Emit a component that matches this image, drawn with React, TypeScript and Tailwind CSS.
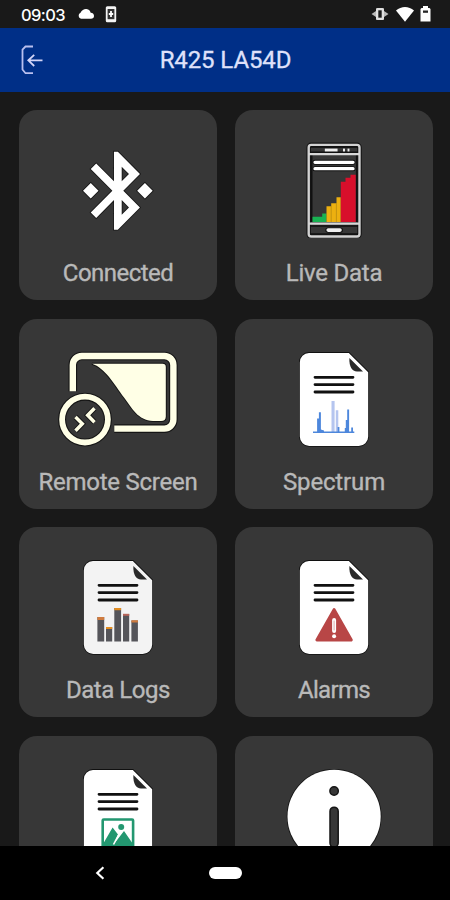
import type { ReactNode } from 'react'

function DocumentIcon({ children, fill = '#ffffff' }: { children: ReactNode; fill?: string }) {
  return (
    <svg viewBox="0 0 120 96" className="h-24 w-30" fill="none" aria-hidden="true">
      <path
        d="M35 1.9H74.8L94.2 21.2V85.5A9.5 9.5 0 0 1 84.7 95H35.3A9.5 9.5 0 0 1 25.8 85.5V11.4A9.5 9.5 0 0 1 35 1.9Z"
        fill={fill}
        stroke="#101010"
        strokeWidth="1.6"
        paintOrder="stroke"
      />
      <path d="M75.4 7L89 20.6H83C78 20 75 16 75.4 7Z" fill="#292929" />
      <path
        d="M41 26.3H79M41 33.6H79M41 41H79"
        stroke="#111111"
        strokeWidth="2.8"
        strokeLinecap="round"
      />
      {children}
    </svg>
  )
}

function BluetoothIcon() {
  return (
    <svg viewBox="0 0 120 96" className="h-24 w-30" aria-hidden="true">
      <path
        transform="translate(13.4 1.9) scale(3.87 3.9)"
        d="M7 12l-2-2-2 2 2 2 2-2zm10.71-4.29L12 2h-1v7.59L6.41 5 5 6.41 10.59 12 5 17.59 6.41 19 11 14.41V22h1l5.71-5.71-4.3-4.29 4.3-4.29zM13 5.83l1.88 1.88L13 9.59V5.83zm1.88 10.46L13 18.17v-3.76l1.88 1.88zM19 10l-2 2 2 2 2-2-2-2z"
        fill="#ffffff"
        stroke="#181818"
        strokeWidth="0.45"
        paintOrder="stroke"
      />
    </svg>
  )
}

function LiveDataIcon() {
  return (
    <svg viewBox="0 0 120 96" className="h-24 w-30" fill="none" aria-hidden="true">
      <rect x="34.7" y="2.9" width="50.8" height="91.6" rx="2.5" stroke="#161616" strokeWidth="4.6" />
      <path d="M37.7 13V80M82.7 13V80M36 5H84M36 10.2H84M36 84H84M36 92H84" stroke="#111111" strokeWidth="1.6" />
      <rect x="34.7" y="2.9" width="50.8" height="91.6" rx="2.5" stroke="#d2d2d2" strokeWidth="2.4" />
      <path d="M34.7 12.2H85.5M34.7 81.7H85.5" stroke="#d8d8d8" strokeWidth="2.2" />
      <path d="M50.8 8H63.6M69 8H71M73.5 8H75.5" stroke="#111111" strokeWidth="5" />
      <path d="M50.8 8H63.6M69 8H71M73.5 8H75.5" stroke="#eeeeee" strokeWidth="3" />
      <path d="M41 20.3H79M41 26.7H79" stroke="#111111" strokeWidth="5" strokeLinecap="round" />
      <path d="M41 20.3H79M41 26.7H79" stroke="#ffffff" strokeWidth="3.3" strokeLinecap="round" />
      <path d="M38.5 80V74.7H48.2V71.4H52.5V80Z" fill="#18b352" />
      <path d="M52.5 80V64.3H57.2V61.3H62.5V55.3H66.8V80Z" fill="#edb010" />
      <path d="M66.8 80V39.7H71.5V35.7H76.5V32.8H81.7V80Z" fill="#d80f2b" />
      <path d="M57.2 64V80M62.4 61V80" stroke="#b98a10" strokeWidth="0.8" />
      <path d="M54 88.1H66.3" stroke="#111111" strokeWidth="5.4" strokeLinecap="round" />
      <path d="M54.2 88.1H66" stroke="#eeeeee" strokeWidth="3.6" strokeLinecap="round" />
    </svg>
  )
}

function RemoteScreenIcon() {
  const frame =
    'M14.8 40.2V14A9 9 0 0 1 23.8 5H106.4A9 9 0 0 1 115.4 14V68.6A9 9 0 0 1 106.4 77.6H56.3'
  const panel =
    'M34 12.8H104.5Q107.8 12.8 107.8 16V65.5Q107.8 70 103 70H95C80 69.5 74 57 66 46.5C56 33 47 17 34 12.8Z'
  const arrows = 'M17.5 66L24.3 72.8L17.5 79.8M36.5 57.3L29.7 64.2L36.5 71.2'

  return (
    <svg viewBox="0 0 120 96" className="h-24 w-30 overflow-visible" fill="none" aria-hidden="true">
      <g stroke="#151515">
        <path d={frame} strokeWidth="8.6" />
        <path d={panel} strokeWidth="2" />
        <circle cx="27" cy="68.6" r="22.9" strokeWidth="8" />
        <path d={arrows} strokeWidth="5.4" />
      </g>
      <path d={panel} fill="#ffffe6" />
      <g stroke="#ffffe6">
        <path d={frame} strokeWidth="6.4" />
        <circle cx="27" cy="68.6" r="22.9" strokeWidth="5.8" />
        <path d={arrows} strokeWidth="3.5" />
      </g>
    </svg>
  )
}

function SpectrumIcon() {
  return (
    <DocumentIcon>
      <path d="M57.5 81V49.9H60.6V81ZM61.8 81V59.2H64.3V81Z" fill="#b5c5ef" />
      <path
        d="M39 80.4H43.1V67.5H44.9V61.3H46.9V78.5L50 79.5V80.4H63.6V76H65.4V80.4H70.8V77H71.8V69H73.2V58.5H75.1V80.4H77.2V76.4H79V80.4H80.3V82H39Z"
        fill="#4d87dc"
      />
    </DocumentIcon>
  )
}

function DataLogsIcon() {
  return (
    <DocumentIcon fill="#f3f3f3">
      <path
        d="M39.4 82.4V58H46.2V82.4ZM48 82.4V68H54.2V82.4ZM56.3 82.4V49H63.1V82.4ZM65 82.4V55H71.2V82.4ZM73.4 82.4V61.4H79.9V82.4Z"
        fill="#55555a"
      />
      <path d="M39.4 58H46.2V61H39.4ZM73.4 61.2H79.9V63.4H73.4Z" fill="#cf7b3e" />
      <path d="M48 68H54.2V70H48ZM56.3 49H63.1V51.3H56.3Z" fill="#e38d20" />
      <path d="M65 54.8H71.2V56.8H65Z" fill="#b8655a" />
    </DocumentIcon>
  )
}

function AlarmsIcon() {
  return (
    <DocumentIcon>
      <path
        d="M60.1 50.5L77.4 81H42.8Z"
        fill="#b84646"
        stroke="#b84646"
        strokeWidth="2.8"
        strokeLinejoin="round"
      />
      <path d="M60.1 61V72" stroke="#ffffff" strokeWidth="4" strokeLinecap="round" />
      <path d="M60.1 62V71" stroke="#dda9a9" strokeWidth="1" strokeLinecap="round" />
      <circle cx="60.1" cy="77.2" r="2" fill="#ffffff" />
    </DocumentIcon>
  )
}

function ImagesIcon() {
  return (
    <DocumentIcon>
      <rect x="44.7" y="51.5" width="30.4" height="31" rx="1" stroke="#239770" strokeWidth="2.6" />
      <path d="M45 76L54.6 59.5L60 66.5L56 76L66 63L75 76V83H45Z" fill="#239770" />
      <path d="M60.5 67L55.5 76.5" stroke="#ffffff" strokeWidth="1.6" />
      <circle cx="63.2" cy="59" r="3" fill="#239770" />
    </DocumentIcon>
  )
}

function InfoIcon() {
  return (
    <svg viewBox="0 0 120 96" className="h-24 w-30 overflow-visible" aria-hidden="true">
      <circle cx="60.1" cy="48.4" r="46.6" fill="#ffffff" stroke="#151515" strokeWidth="1.6" paintOrder="stroke" />
      <circle cx="60.1" cy="23" r="4.2" fill="#373737" stroke="#151515" strokeWidth="1.5" />
      <rect x="56" y="39.2" width="8.2" height="40" rx="4.1" fill="#373737" stroke="#151515" strokeWidth="1.5" />
    </svg>
  )
}

type TileProps = {
  icon: ReactNode
  label?: string
  tracking?: string
}

const tiles: TileProps[] = [
  { label: 'Connected', icon: <BluetoothIcon />, tracking: 'tracking-[-0.55px]' },
  { label: 'Live Data', icon: <LiveDataIcon />, tracking: 'tracking-[-0.25px]' },
  { label: 'Remote Screen', icon: <RemoteScreenIcon />, tracking: 'tracking-[-0.25px]' },
  { label: 'Spectrum', icon: <SpectrumIcon />, tracking: 'tracking-[-0.15px]' },
  { label: 'Data Logs', icon: <DataLogsIcon />, tracking: 'tracking-[-0.45px]' },
  { label: 'Alarms', icon: <AlarmsIcon />, tracking: 'tracking-[-0.7px]' },
  { icon: <ImagesIcon /> },
  { icon: <InfoIcon /> },
]

function Tile({ label, icon, tracking = '' }: TileProps) {
  return (
    <button
      type="button"
      className="flex h-[190px] flex-col items-center rounded-[18px] bg-[#373737] pt-8 pl-px"
    >
      {icon}
      {label ? (
        <span
          className={`mt-[21px] text-2xl leading-7 whitespace-nowrap text-[#b9b9b9] [-webkit-text-stroke:0.35px_#b9b9b9] ${tracking}`}
        >
          {label}
        </span>
      ) : null}
    </button>
  )
}

function StatusBar() {
  return (
    <div className="flex h-[27.5px] shrink-0 items-center bg-[#191919] pr-[19px] pl-[21px] text-white">
      <span className="w-[56px] pt-[2px] font-[Inter] text-[16.5px] leading-5 font-medium tracking-[-0.6px]">
        09:03
      </span>
      <svg viewBox="0 0 18 12" className="h-3 w-[18px]" fill="currentColor" aria-hidden="true">
        <path d="M4 10.7A3.2 3.2 0 0 1 3.5 4.7C5 2 7.3 .8 9.5 1.1C12 1.3 13.3 3 13.7 4.8C16 5 17 6.4 17 8C17 9.8 15.8 10.7 14 10.7Z" />
      </svg>
      <svg viewBox="0 0 12 18" className="ml-[10px] h-[18px] w-3" fill="none" aria-hidden="true">
        <rect x="0.8" y="1.3" width="10.4" height="16" rx="1.5" fill="#f4f4f4" />
        <path d="M2.6 4H9.4V14.2H2.6Z" fill="#333333" />
        <path d="M6 6V12M3.8 9H8.2" stroke="#ffffff" strokeWidth="1.8" />
      </svg>
      <div className="ml-auto flex items-center">
        <svg viewBox="0 0 18 14" className="h-[14px] w-[18px]" fill="none" aria-hidden="true">
          <path d="M5 1.5H13V4L17.5 7L13 10V12.5H5V10L.5 7L5 4Z" fill="#b9b9b9" />
          <rect x="5" y="1" width="8" height="12" rx="1.5" fill="#e0e0e0" />
          <path d="M7.3 3.3H10.7V10.7H7.3Z" fill="#191919" />
        </svg>
        <svg viewBox="0 0 18 16" className="ml-[7px] h-4 w-[18px]" fill="currentColor" aria-hidden="true">
          <path d="M0 4.5C5.2-.2 12.8-.2 18 4.5L9 15.7Z" />
        </svg>
        <svg viewBox="0 0 11 16" className="ml-[6px] h-4 w-[11px]" fill="none" aria-hidden="true">
          <path d="M3 0H8V2H9.5L10.5 3V15.5H.5V3L1.5 2H3Z" fill="#ffffff" />
          <path d="M3 4.5H8V6.8H3Z" fill="#262626" />
        </svg>
      </div>
    </div>
  )
}

function Header() {
  return (
    <header className="grid h-[64.5px] shrink-0 grid-cols-[60px_1fr_60px] items-center bg-[#002f87]">
      <button type="button" className="pl-[21px]" aria-label="Log out">
        <svg viewBox="0 0 22 30" className="h-[30px] w-[22px]" fill="none" aria-hidden="true">
          <path d="M12 1.5H4.5L1.5 4.5V24.5L4.5 28.2H12" stroke="#b9c0ef" strokeWidth="1.8" />
          <path d="M21.5 15.3H7.3M13.2 9.8L7.3 15.3L13.2 21" stroke="#d3d5f7" strokeWidth="1.8" />
        </svg>
      </button>
      <h1 className="pl-px text-center text-2xl leading-7 tracking-[-0.1px] whitespace-nowrap text-[#dfe1fa] [-webkit-text-stroke:0.3px_#dfe1fa]">
        R425 LA54D
      </h1>
    </header>
  )
}

function NavigationBar() {
  return (
    <nav className="grid h-[54px] shrink-0 grid-cols-[200px_50px_200px] items-center justify-items-center bg-black text-white">
      <svg viewBox="0 0 10 14" className="h-[14px] w-[10px]" fill="none" aria-hidden="true">
        <path d="M8.4 1.3L2.3 7L8.4 12.7" stroke="currentColor" strokeWidth="2.2" />
      </svg>
      <span className="h-[12.5px] w-[33px] rounded-full bg-white" />
    </nav>
  )
}

export default function App() {
  return (
    <div className="flex h-[900px] w-[450px] flex-col overflow-hidden bg-[#191919] font-[Roboto,sans-serif]">
      <StatusBar />
      <Header />
      <main className="min-h-0 flex-1 overflow-hidden pt-[18px] pr-[17.5px] pl-[18.5px]">
        <div className="grid grid-cols-2 gap-x-[18px] gap-y-[18.5px]">
          {tiles.map((tile, index) => (
            <Tile key={index} {...tile} />
          ))}
        </div>
      </main>
      <NavigationBar />
    </div>
  )
}
